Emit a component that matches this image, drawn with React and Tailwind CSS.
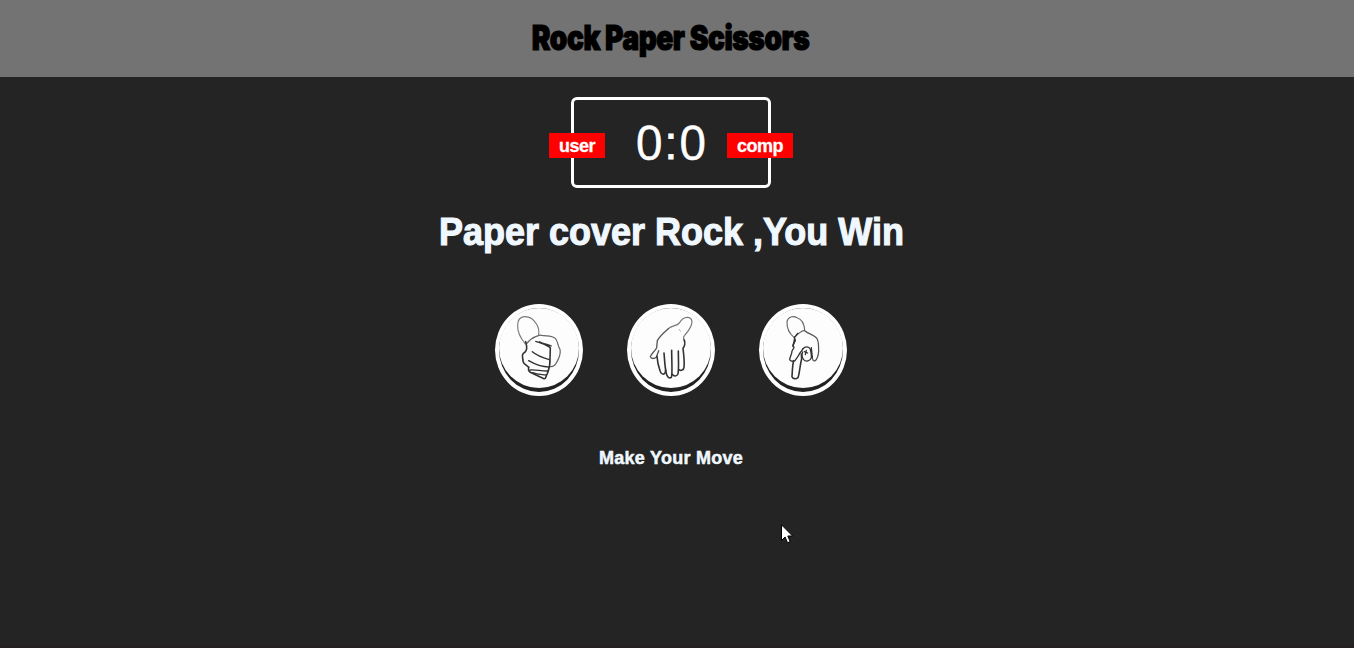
import React from "react";

const HANDS = {
  rock: (
    <>
      <path strokeWidth="3.4" stroke="#777" d="M121 147 C107 130 97 111 98 90 C98 76 105 67 117 65 C132 64 147 74 155 88 C160 97 163 108 161 120" />
      <path strokeWidth="3.6" stroke="#666" d="M125 146 C133 136 141 129 152 125 C160 122 165 119 170 121 C184 124 201 121 211 130 C219 138 218 153 225 163 C228 176 222 190 215 202 C211 211 204 216 195 215" />
      <path strokeWidth="4.8" d="M122 140 L125 154 C126 164 122 171 115 175 C108 183 115 189 114 199 C116 209 127 211 131 217" />
      <path strokeWidth="4.8" d="M131 217 C129 226 134 232 142 235 L177 251 C184 252 182 244 187 236 C191 226 196 208 195 191 L196 159" />
      <path strokeWidth="3.6" d="M152 139 C165 143 183 149 196 158 M164 140 C176 147 188 147 199 153 M186 151 L194 155" />
      <path strokeWidth="4.2" d="M142 170 C155 181 173 188 193 194 M131 197 C148 207 169 216 192 216 M136 225 C151 223 170 229 190 228 M143 233 C158 239 170 238 184 240" />
    </>
  ),
  paper: (
    <>
      <path strokeWidth="3.6" stroke="#777" d="M154 101 C164 91 178 94 187 84 C193 73 202 66 213 67 C226 69 227 81 222 93 C217 105 210 113 203 121 C198 126 199 131 202 137" />
      <path strokeWidth="4" stroke="#555" d="M154 101 C141 112 128 123 121 137 L119 158 C114 169 102 176 100 185 C102 193 113 191 118 187 L125 167" />
      <path strokeWidth="4.8" d="M120 184 C121 198 124 213 129 227 C131 237 140 240 144 235 L146 225" />
      <path strokeWidth="4.8" d="M141 174 C143 194 143 215 148 235 C150 247 157 251 163 247 C167 240 164 199 164 166" />
      <path strokeWidth="4.8" d="M165 237 C170 245 179 245 183 237 C186 220 184 194 184 168 M186 224 C192 229 200 225 201 217 C203 200 200 176 198 160 C204 153 204 143 202 135" />
      <path strokeWidth="2.4" stroke="#999" d="M186 103 L191 109" />
    </>
  ),
  scissors: (
    <>
      <path strokeWidth="3.4" stroke="#666" d="M135 127 C121 115 113 98 114 80 C117 66 132 61 144 68 C157 72 166 86 167 106 C157 107 147 116 137 126" />
      <path strokeWidth="3.8" stroke="#555" d="M167 107 C177 116 192 119 202 128 C211 139 208 154 209 169 C208 181 204 192 199 197 C193 200 190 194 190 185" />
      <path strokeWidth="4" d="M146 115 L136 128 L139 137 L132 150 L135 158 L129 168 C129 178 123 185 122 193 C123 199 132 200 138 197 L149 181 C151 173 158 171 161 162" />
      <path strokeWidth="4.8" d="M137 132 L132 154 M134 197 C130 211 130 231 129 245 C131 252 141 253 147 248 C153 231 152 213 158 191 L157 177" />
      <path strokeWidth="3.8" d="M161 162 C168 154 180 153 184 163 C185 171 188 178 187 188 C183 199 171 201 164 194 C159 188 158 179 161 171 M166 170 L176 174 M172 166 L169 179 M187 158 L190 187" />
    </>
  ),
};

function Choice({ name }) {
  return (
    <button
      aria-label={name}
      className="flex h-[92px] w-[88px] items-start rounded-[50%] border-4 border-white bg-[#222]"
    >
      <svg
        viewBox="42 39 240 240"
        className="block size-20 rounded-full bg-[#fdfdfd]"
        fill="none"
        stroke="#333"
        strokeLinecap="round"
        strokeLinejoin="round"
      >
        <circle cx="162" cy="159" r="119.5" stroke="#ddd" strokeWidth="1" strokeDasharray="9 4" />
        {HANDS[name]}
      </svg>
    </button>
  );
}

export default function App() {
  return (
    <div className="relative flex h-[648px] w-full flex-col overflow-hidden border-b-[3px] border-[#241f21] bg-[#242424] font-['Liberation_Sans',sans-serif] text-white">
      <header className="flex h-[77px] shrink-0 items-center justify-center bg-[#737373] pr-3">
        <h1 className="origin-center scale-x-[0.823] whitespace-nowrap pb-0.5 font-['Inter',sans-serif] text-[34px] leading-none font-black tracking-[-0.5px] text-black [-webkit-text-stroke:1.2px_#000]">
          Rock Paper Scissors
        </h1>
      </header>
      <main className="flex flex-col items-center pr-3">
        <section className="relative mt-5 flex h-[91px] w-[200px] items-center justify-center rounded-md border-[3px] border-white">
          <span className="absolute top-[33px] -left-[25px] flex h-[25px] w-14 items-center justify-center bg-[#ff0000] pt-0.5 text-[18px] font-bold tracking-[-0.5px] [-webkit-text-stroke:0.3px_#fff]">
            user
          </span>
          <p className="flex items-center pb-0.5 font-['Open_Sans',sans-serif] text-[48px] leading-none [-webkit-text-stroke:0.6px_#fff]">
            <span>0</span>
            <span className="w-4 pt-0.5 text-center font-['Liberation_Sans',sans-serif] text-[46px] [-webkit-text-stroke:0.8px_#fff]">:</span>
            <span>0</span>
          </p>
          <span className="absolute top-[33px] -right-[25px] flex h-[25px] w-[66px] items-center justify-center bg-[#ff0000] pt-0.5 text-[18px] font-bold tracking-[-0.5px] [-webkit-text-stroke:0.3px_#fff]">
            comp
          </span>
        </section>
        <h2 className="mt-[22px] flex h-[46px] scale-x-[0.947] items-center whitespace-nowrap pb-0.5 text-[38px] font-bold text-[#f0f8ff] [-webkit-text-stroke:1.1px_#f0f8ff]">
          Paper cover Rock ,You Win
        </h2>
        <div className="mt-12 flex gap-11">
          <Choice name="rock" />
          <Choice name="paper" />
          <Choice name="scissors" />
        </div>
        <p className="mt-12 text-[18px] leading-7 font-bold tracking-[0.25px] whitespace-nowrap text-[#f0f8ff] [-webkit-text-stroke:0.5px_#f0f8ff]">Make Your Move</p>
      </main>
      <svg className="absolute top-[524px] left-[781px] h-5 w-3" viewBox="0 0 12 20" fill="#fff" stroke="#000" strokeWidth="1">
        <path d="M.5 .8V16.5L4.1 13 6.5 18.8 9.2 17.6 6.8 12H11.6Z" />
      </svg>
    </div>
  );
}
